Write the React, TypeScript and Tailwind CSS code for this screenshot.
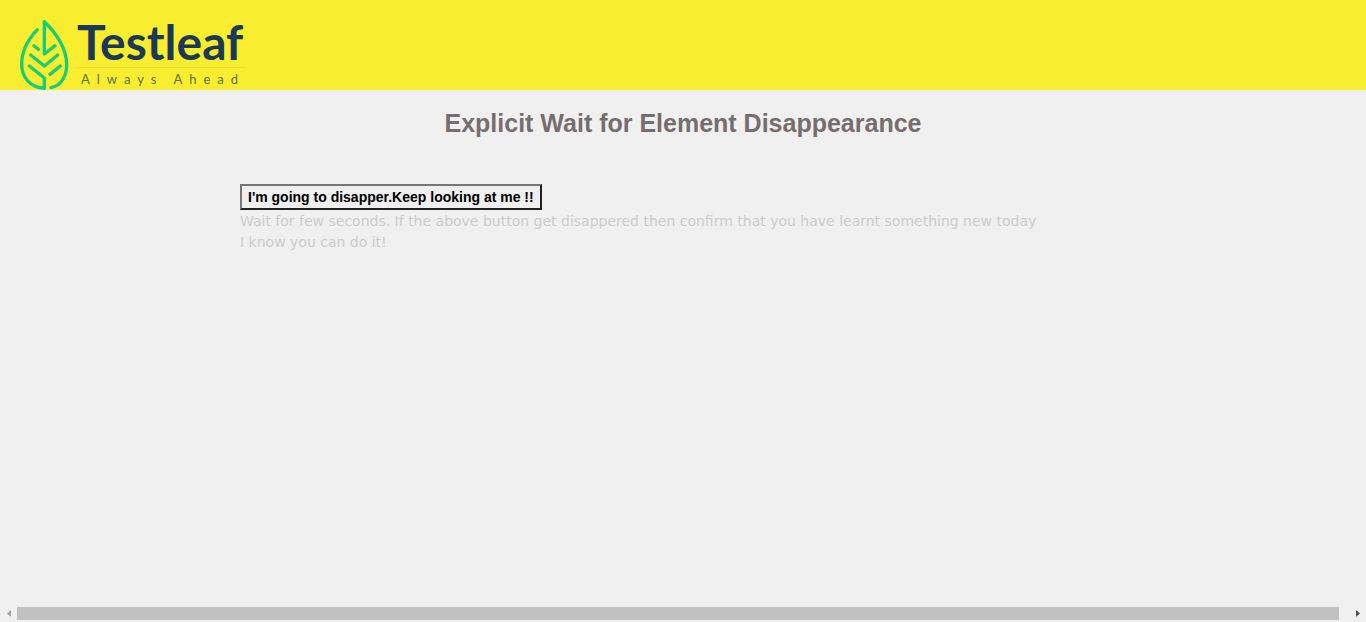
function Leaf() {
  return (
    <svg
      className="h-[71px] w-[50px] shrink-0"
      viewBox="27 27 150 213"
      fill="none"
      stroke="#16ce78"
      strokeWidth="10"
      strokeLinecap="round"
      strokeLinejoin="round"
      aria-hidden="true"
    >
      <path d="M82 59C58 84 35 122 35 162C35 204 62 232 103 235V204L58 168" />
      <path d="M123 233C154 226 170 198 170 164C170 114 136 66 103 35V132L135 107" />
      <path d="M72 107L85 118" />
      <path d="M62 135L103 168L143 135" />
      <path d="M151 168L120 193" />
    </svg>
  );
}

function Logo() {
  return (
    <a href="#" className="flex gap-2 text-[#1b3956]" aria-label="Testleaf home">
      <Leaf />
      <span className="flex flex-col">
        <span className="h-[49px] border-b border-[#e6df35] font-['Lato',sans-serif] text-[48px] leading-[46px] font-bold">
          Testleaf
        </span>
        <span className="pl-1 font-['Lato',sans-serif] text-[13px] leading-[22px] tracking-[7px] text-[#5f7040]">
          Always Ahead
        </span>
      </span>
    </a>
  );
}

function BottomScroller() {
  return (
    <div className="flex h-4 items-center justify-between pb-px">
      <button type="button" aria-label="Scroll left" className="flex w-[17px] shrink-0 justify-center">
        <svg className="h-[7px] w-1" viewBox="0 0 4 7" fill="#a3a3a3">
          <path d="M4 0V7L0 3.5Z" />
        </svg>
      </button>
      <div className="h-[13px] flex-1 bg-[#c1c1c1]" />
      <button type="button" aria-label="Scroll right" className="flex w-[27px] shrink-0 justify-end pr-[6px]">
        <svg className="h-[7px] w-1" viewBox="0 0 4 7" fill="#505050">
          <path d="M0 0V7L4 3.5Z" />
        </svg>
      </button>
    </div>
  );
}

export default function App() {
  return (
    <div className="flex min-h-screen flex-col bg-[#f0f0f0]">
      <header className="h-[90px] bg-[#f8ee2f] pt-[19px] pl-[19px]">
        <Logo />
      </header>
      <main className="flex-1">
        <h1 className="pt-4 text-center font-['Liberation_Sans',sans-serif] text-[25px] leading-[34px] font-bold text-[#766e6e]">
          Explicit Wait for Element Disappearance
        </h1>
        <section className="mx-auto max-w-[886px] pt-11">
          <button
            type="button"
            className="block border-2 border-t-[#767676] border-r-[#212121] border-b-[#212121] border-l-[#767676] bg-[#efefef] px-1.5 font-['Liberation_Sans',sans-serif] text-[14px] leading-[22px] font-bold text-black"
          >
            I'm going to disapper.Keep looking at me !!
          </button>
          <p className="pt-px font-['Verdana','DejaVu_Sans',sans-serif] text-[14px] leading-[21px] text-[#cccccc]">
            Wait for few seconds. If the above button get disappered then confirm that you have learnt something new today
            <br />I know you can do it!
          </p>
        </section>
      </main>
      <BottomScroller />
    </div>
  );
}
